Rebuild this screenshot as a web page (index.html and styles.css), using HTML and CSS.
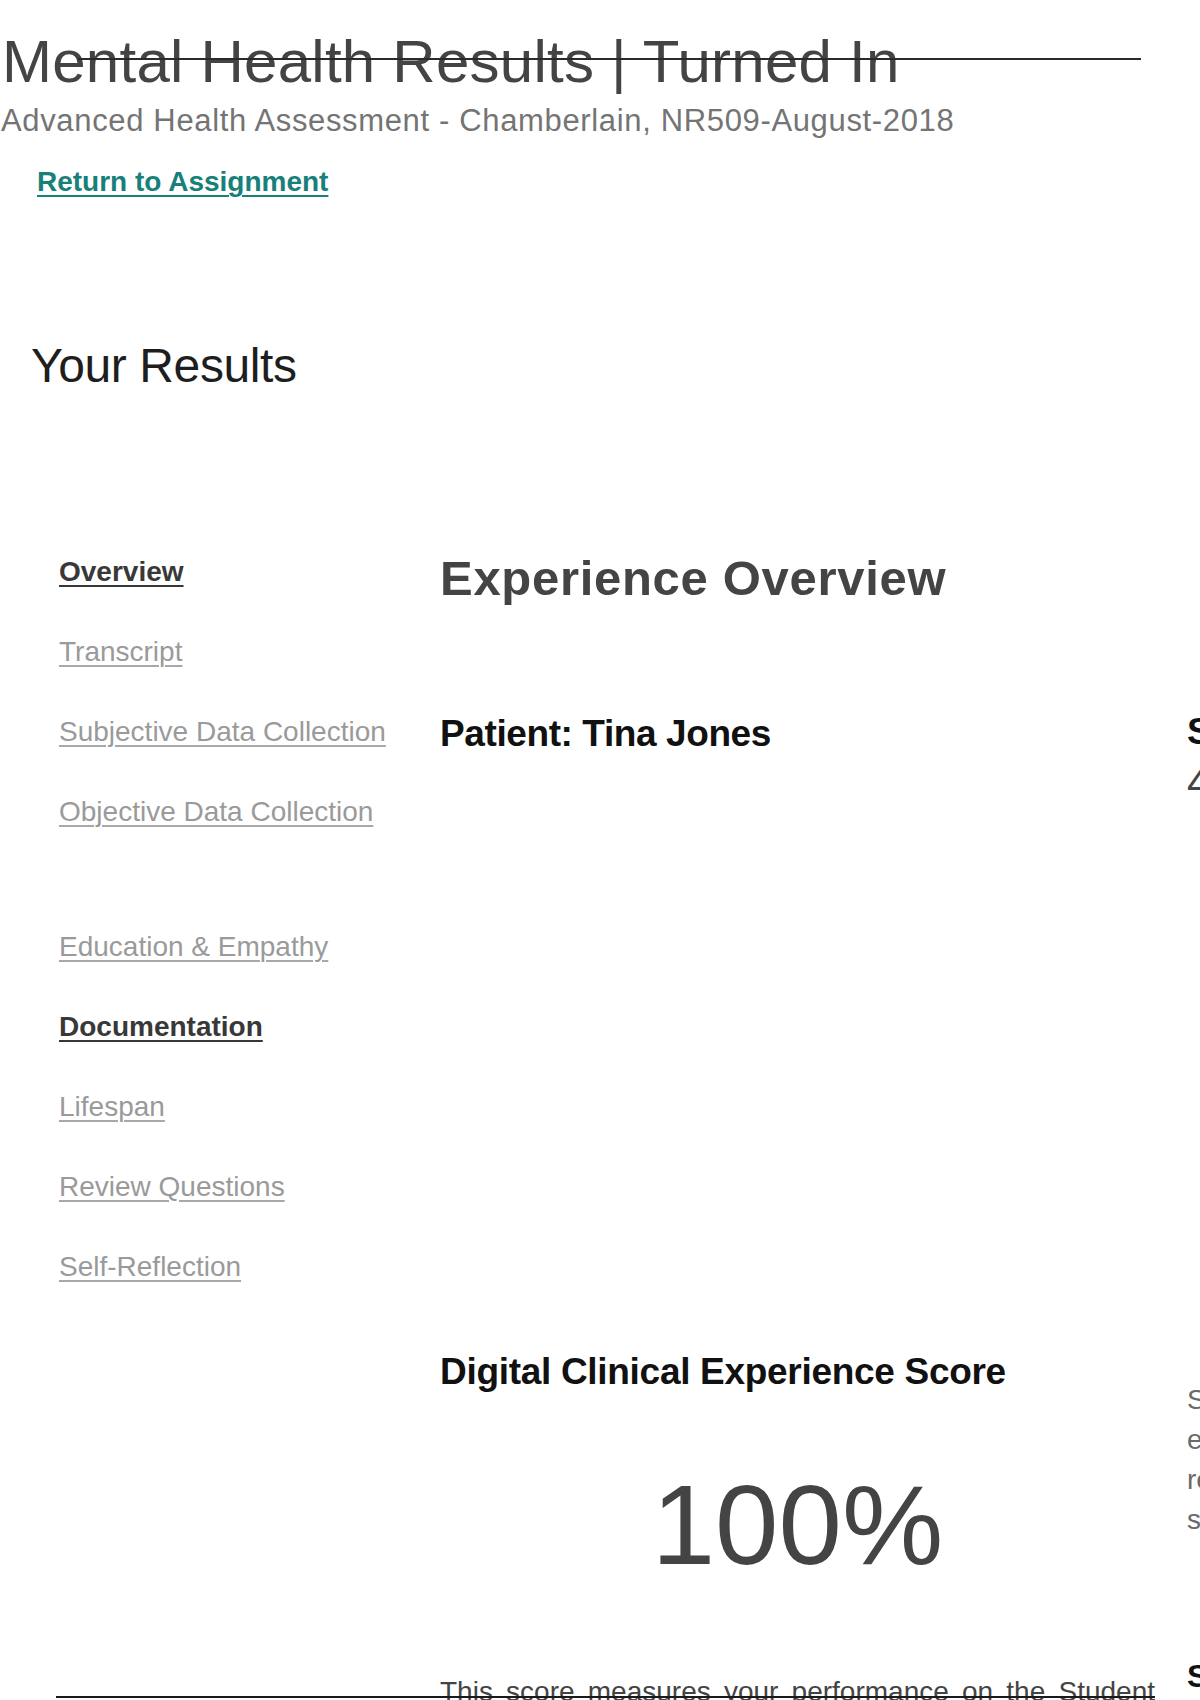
FILE: index.html
```html
<!DOCTYPE html>
<html lang="en">
<head>
<meta charset="utf-8">
<title>Mental Health Results | Turned In</title>
<link rel="stylesheet" href="styles.css">
</head>
<body>
<header class="page-header">
  <h1 class="page-title">Mental Health Results | Turned In</h1>
  <p class="course">Advanced Health Assessment - Chamberlain, NR509-August-2018</p>
  <a class="return-link" href="#">Return to Assignment</a>
  <h2 class="results-title">Your Results</h2>
</header>

<div class="layout">
  <nav class="side-nav">
    <a class="nav-item active" href="#">Overview</a>
    <a class="nav-item" href="#">Transcript</a>
    <a class="nav-item" href="#">Subjective Data Collection</a>
    <a class="nav-item" href="#">Objective Data Collection</a>
    <a class="nav-item nav-gap" href="#">Education &amp; Empathy</a>
    <a class="nav-item active" href="#">Documentation</a>
    <a class="nav-item" href="#">Lifespan</a>
    <a class="nav-item" href="#">Review Questions</a>
    <a class="nav-item" href="#">Self-Reflection</a>
  </nav>

  <main class="main-col">
    <h2 class="section-title">Experience Overview</h2>
    <h3 class="patient">Patient: Tina Jones</h3>
    <h3 class="score-title">Digital Clinical Experience Score</h3>
    <div class="score">100%</div>
    <p class="score-desc">This score measures your performance on the Student Performance Index and the Documentation portion of this assignment.</p>
  </main>

  <aside class="side-col">
    <h3 class="spi-title">Student Performance Index</h3>
    <div class="spi-value">40 out of 40</div>
    <p class="spi-desc">Shadow Health's Student Performance Index<br>evaluates the findings you elicited, and<br>reflects the thoroughness of your interview<br>skills and clinical reasoning.</p>
    <h3 class="spi-sub">Subjective Data Collection</h3>
  </aside>
</div>
</body>
</html>
```

FILE: styles.css
```css
html {
  overflow: hidden;
}

body {
  margin: 0;
  width: 2000px;
  background: #ffffff;
  font-family: "Liberation Sans", Arial, Helvetica, sans-serif;
  color: #333333;
}

.page-header {
  padding-top: 32px;
}

.page-title {
  position: relative;
  margin: 0;
  padding-left: 2px;
  font-size: 60px;
  line-height: 60px;
  font-weight: normal;
  letter-spacing: 0.25px;
  color: #444444;
}

.page-title::after {
  content: "";
  position: absolute;
  left: 78px;
  top: 26px;
  width: 1063px;
  height: 2px;
  background: #2a2a2a;
}

.course {
  margin: 11px 0 0;
  padding-left: 1px;
  font-size: 31px;
  line-height: 36px;
  letter-spacing: 0.65px;
  color: #747474;
}

.return-link {
  display: inline-block;
  margin: 27px 0 0 37px;
  font-size: 28px;
  line-height: 32px;
  font-weight: bold;
  color: #17807a;
  text-decoration: underline;
  text-decoration-thickness: 2px;
  text-underline-offset: 4px;
}

.results-title {
  margin: 140px 0 0 31px;
  font-size: 48px;
  line-height: 56px;
  font-weight: normal;
  letter-spacing: -0.4px;
  color: #1e1e1e;
}

.layout {
  display: grid;
  grid-template-columns: 349px 715px 760px;
  column-gap: 32px;
  margin-top: 156px;
  padding-left: 59px;
}

.side-nav {
  display: flex;
  flex-direction: column;
  align-items: flex-start;
  padding-top: 6px;
  row-gap: 48px;
}

.nav-item {
  font-size: 28px;
  line-height: 32px;
  color: #9a9a9a;
  text-decoration: underline;
  text-decoration-thickness: 2px;
  text-underline-offset: 4px;
  text-decoration-color: #a8a8a8;
}

.nav-item.active {
  font-weight: bold;
  color: #383838;
  text-decoration-color: #383838;
}

.nav-gap {
  margin-top: 55px;
}

.main-col {
  display: flex;
  flex-direction: column;
}

.section-title {
  margin: 0;
  font-size: 49px;
  line-height: 56px;
  font-weight: bold;
  letter-spacing: 0.7px;
  color: #444444;
}

.patient {
  margin: 106px 0 0;
  font-size: 37px;
  line-height: 44px;
  font-weight: bold;
  letter-spacing: -0.4px;
  color: #111111;
}

.score-title {
  margin: 594px 0 0;
  font-size: 37px;
  line-height: 44px;
  font-weight: bold;
  letter-spacing: -0.3px;
  color: #111111;
}

.score {
  margin-top: 74px;
  font-size: 114px;
  line-height: 114px;
  text-align: center;
  color: #444444;
}

.score-desc {
  position: relative;
  margin: 90px 0 0;
  font-size: 28px;
  line-height: 40px;
  text-align: justify;
  color: #444444;
}

.score-desc::before {
  content: "";
  position: absolute;
  left: -384px;
  top: 24px;
  width: 1099px;
  height: 2px;
  background: #1a1a1a;
}

.side-col {
  padding-top: 160px;
  white-space: nowrap;
}

.spi-title {
  margin: 0;
  font-size: 37px;
  line-height: 44px;
  font-weight: bold;
  color: #111111;
}

.spi-value {
  margin-top: 4px;
  font-size: 42px;
  line-height: 50px;
  color: #444444;
}

.spi-desc {
  margin: 572px 0 0;
  font-size: 28px;
  line-height: 40px;
  color: #6a6a6a;
}

.spi-sub {
  margin: 116px 0 0;
  font-size: 32px;
  line-height: 40px;
  font-weight: bold;
  color: #111111;
}
```
